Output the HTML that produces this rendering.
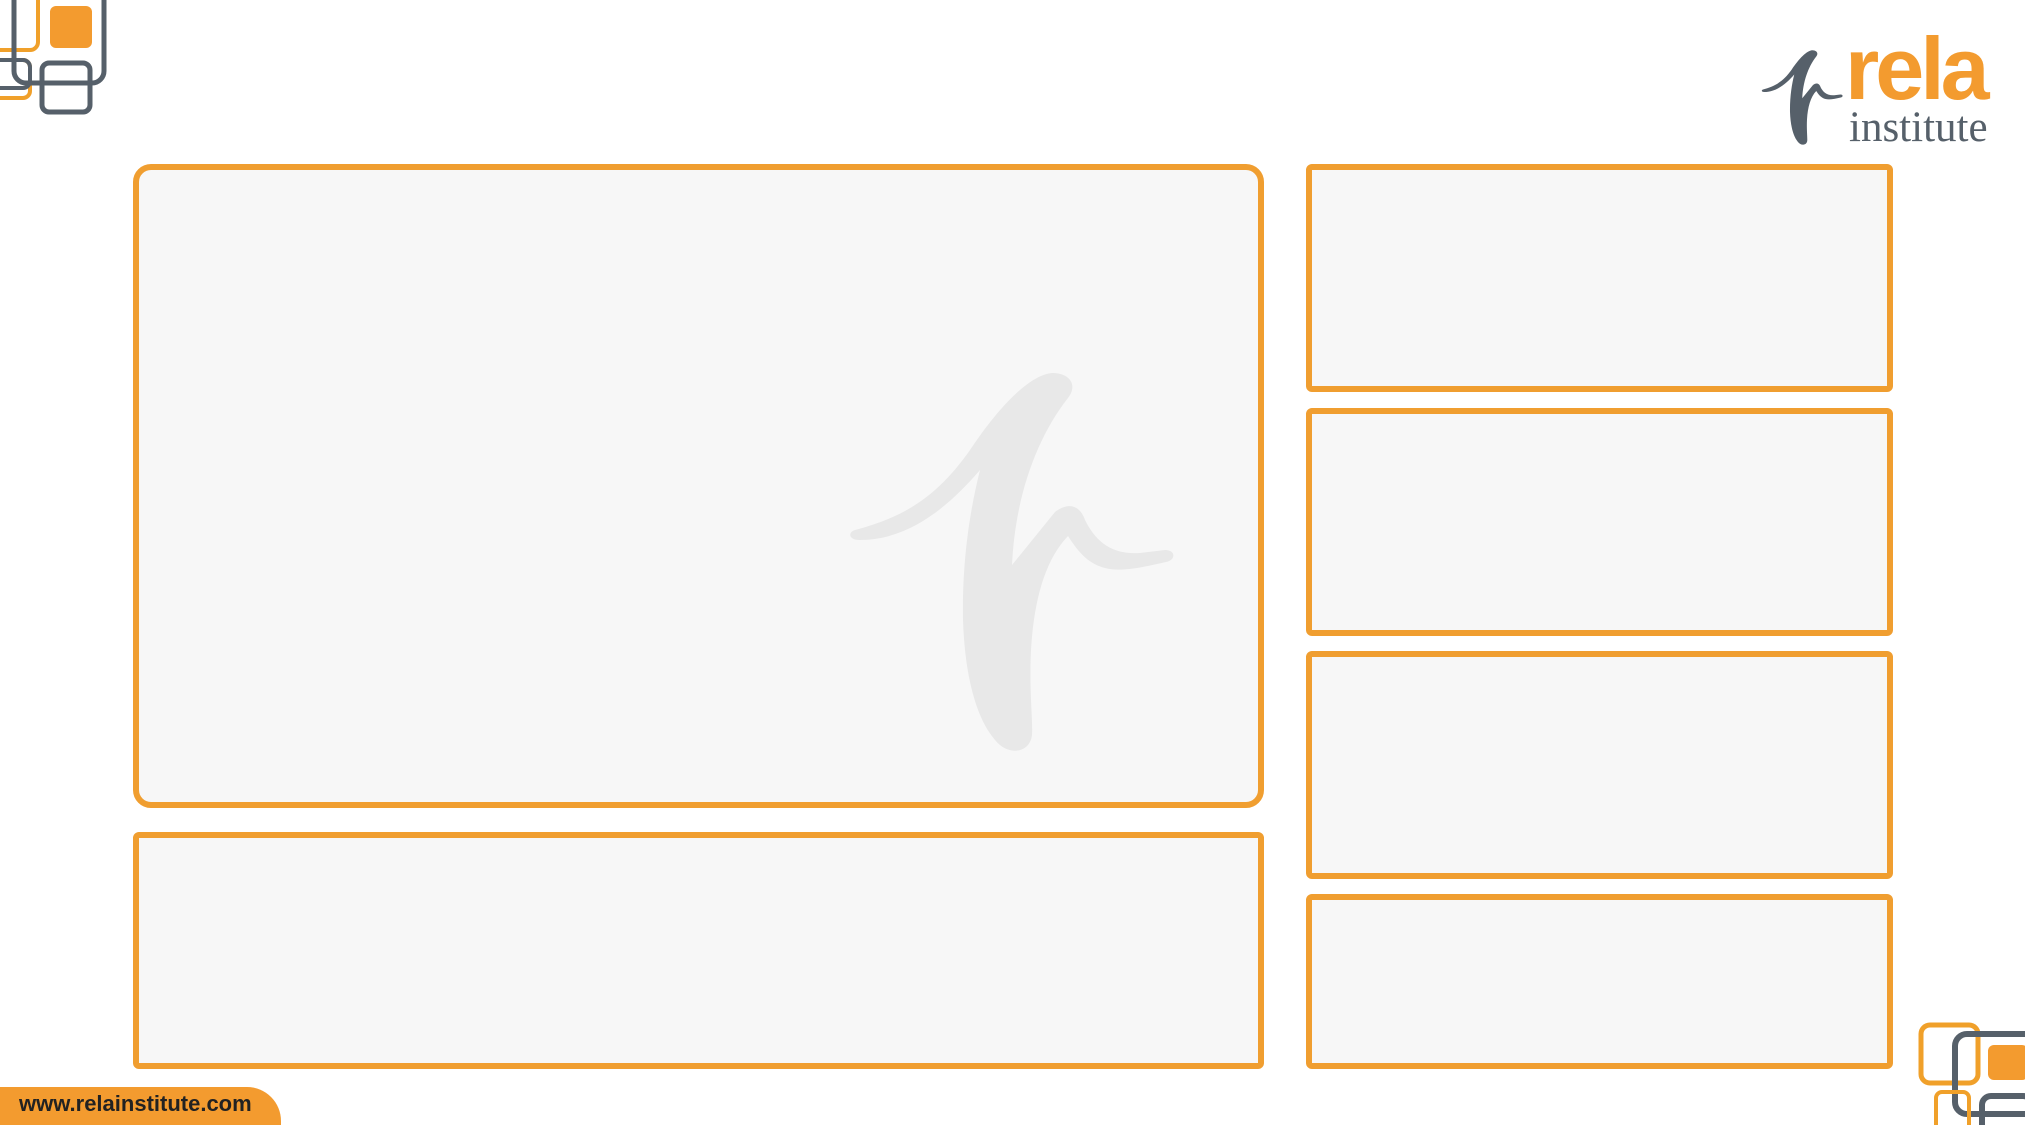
<!DOCTYPE html>
<html><head><meta charset="utf-8"><style>
html,body{margin:0;padding:0}
body{width:2025px;height:1125px;position:relative;background:#fff;overflow:hidden;font-family:"Liberation Sans",sans-serif}
.b{position:absolute;box-sizing:border-box;border:6px solid #f09e30;background:#f7f7f7}
svg{position:absolute}
</style></head><body>
<div class="b" style="left:133px;top:164px;width:1131px;height:644px;border-radius:18px"></div>
<div class="b" style="left:133px;top:832px;width:1131px;height:237px;border-radius:6px"></div>
<div class="b" style="left:1306px;top:164px;width:587px;height:228px;border-radius:6px"></div>
<div class="b" style="left:1306px;top:408px;width:587px;height:228px;border-radius:6px"></div>
<div class="b" style="left:1306px;top:651px;width:587px;height:228px;border-radius:6px"></div>
<div class="b" style="left:1306px;top:894px;width:587px;height:175px;border-radius:6px"></div>

<svg style="left:840px;top:360px" width="350" height="400" viewBox="0 0 350 400">
<path fill="#e8e8e8" d="M15,170 C60,158 95,140 130,90 C160,45 190,15 212,13 C230,13 238,25 228,38 C195,80 175,140 172,205 L215,152 C228,142 240,145 245,160 C255,180 270,195 300,193 L325,190 C336,190 336,200 326,202 C300,208 280,212 265,208 C250,204 240,195 228,176 C205,200 194,240 191,290 C189,330 193,360 192,375 C190,392 172,395 160,385 C138,365 125,320 123,260 C122,200 130,150 140,110 C110,145 70,180 20,180 C8,180 8,172 15,170 Z"/>
</svg>

<svg style="left:1758px;top:47px" width="90" height="100" viewBox="0 0 350 400">
<path fill="#56606a" d="M15,170 C60,158 95,140 130,90 C160,45 190,15 212,13 C230,13 238,25 228,38 C195,80 175,140 172,205 L215,152 C228,142 240,145 245,160 C255,180 270,195 300,193 L325,190 C336,190 336,200 326,202 C300,208 280,212 265,208 C250,204 240,195 228,176 C205,200 194,240 191,290 C189,330 193,360 192,375 C190,392 172,395 160,385 C138,365 125,320 123,260 C122,200 130,150 140,110 C110,145 70,180 20,180 C8,180 8,172 15,170 Z"/>
</svg>
<div style="position:absolute;left:1845px;top:24px;font-size:88px;font-weight:bold;color:#f39b2f;letter-spacing:-4px;line-height:90px">rela</div>
<div style="position:absolute;left:1849px;top:104px;font-family:'Liberation Serif',serif;font-size:43px;color:#56606a;line-height:48px">institute</div>

<svg style="left:0;top:0" width="150" height="130">
<rect x="-20" y="-20" width="58" height="70" rx="8" fill="none" stroke="#f0a02a" stroke-width="4"/>
<rect x="-20" y="60" width="50" height="38" rx="7" fill="none" stroke="#f0a02a" stroke-width="4"/>
<rect x="-20" y="60" width="50" height="28" rx="7" fill="none" stroke="#56606a" stroke-width="4"/>
<rect x="14" y="-20" width="90" height="103" rx="12" fill="none" stroke="#56606a" stroke-width="5"/>
<rect x="50" y="6" width="42" height="42" rx="6" fill="#f39b2f"/>
<rect x="42" y="63" width="48" height="49" rx="7" fill="none" stroke="#56606a" stroke-width="5"/>
</svg>

<svg style="left:1900px;top:1010px" width="125" height="115">
<rect x="21" y="15" width="57" height="58" rx="9" fill="none" stroke="#f0a02a" stroke-width="5"/>
<rect x="55" y="24" width="90" height="80" rx="12" fill="none" stroke="#56606a" stroke-width="6"/>
<rect x="88" y="35" width="40" height="35" rx="6" fill="#f39b2f"/>
<rect x="36" y="82" width="33" height="45" rx="6" fill="none" stroke="#f0a02a" stroke-width="4"/>
<rect x="82" y="86" width="50" height="45" rx="9" fill="none" stroke="#56606a" stroke-width="6"/>
</svg>

<div style="position:absolute;left:0;top:1087px;width:281px;height:38px;background:#f39b2f;border-radius:0 34px 0 0"></div>
<div style="position:absolute;left:19px;top:1090px;font-size:22px;font-weight:bold;color:#222;line-height:28px">www.relainstitute.com</div>
</body></html>
